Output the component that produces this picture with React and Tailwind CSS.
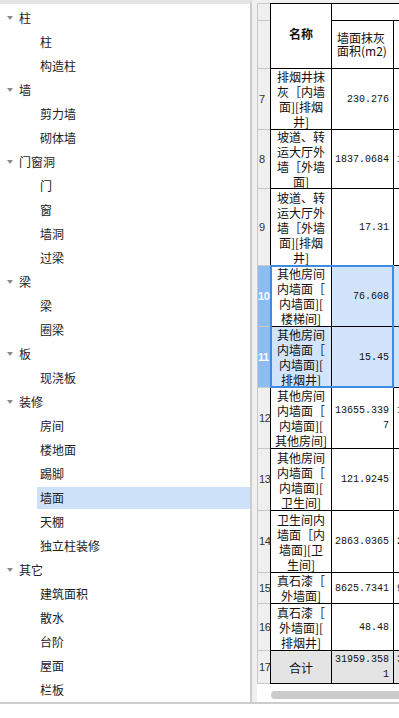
// App.jsx
const tree = [
  { name: '柱', items: ['柱', '构造柱'] },
  { name: '墙', items: ['剪力墙', '砌体墙'] },
  { name: '门窗洞', items: ['门', '窗', '墙洞', '过梁'] },
  { name: '梁', items: ['梁', '圈梁'] },
  { name: '板', items: ['现浇板'] },
  { name: '装修', items: ['房间', '楼地面', '踢脚', '墙面', '天棚', '独立柱装修'] },
  { name: '其它', items: ['建筑面积', '散水', '台阶', '屋面', '栏板'] },
];

const rows = [
  { no: 7, h: 'h-[61px]', name: ['排烟井抹', '灰［内墙', '面][排烟', '井]'], val: ['230.276'], next: ['230.276'] },
  { no: 8, h: 'h-[59px]', name: ['坡道、转', '运大厅外', '墙［外墙', '面]'], val: ['1837.0684'], next: ['1837.0684'] },
  { no: 9, h: 'h-[77px]', name: ['坡道、转', '运大厅外', '墙［外墙', '面][排烟', '井]'], val: ['17.31'], next: ['17.31'] },
];

const selRows = [
  { no: 10, h: 'h-[61px]', name: ['其他房间', '内墙面［', '内墙面][', '楼梯间]'], val: ['76.608'], next: ['76.608'], active: true },
  { no: 11, h: 'h-[61px]', name: ['其他房间', '内墙面［', '内墙面][', '排烟井]'], val: ['15.45'], next: ['15.45'] },
];

const moreRows = [
  { no: 12, h: 'h-[61px]', name: ['其他房间', '内墙面［', '内墙面][', '其他房间]'], val: ['13655.339', '7'], next: ['13655.339', '7'] },
  { no: 13, h: 'h-[62px]', name: ['其他房间', '内墙面［', '内墙面][', '卫生间]'], val: ['121.9245'], next: ['121.9245'] },
  { no: 14, h: 'h-[62px]', name: ['卫生间内', '墙面［内', '墙面][卫', '生间]'], val: ['2863.0365'], next: ['2863.0365'] },
  { no: 15, h: 'h-[31px]', name: ['真石漆［', '外墙面]'], val: ['8625.7341'], next: ['9025.7341'] },
  { no: 16, h: 'h-[47px]', name: ['真石漆［', '外墙面][', '排烟井]'], val: ['48.48'], next: ['48.48'] },
  { no: 17, h: 'h-[33px]', name: ['合计'], val: ['31959.358', '1'], next: ['32359.358', '1'], total: true },
];

function Lines({ lines }) {
  return lines.map((l, i) => <div key={i}>{l}</div>);
}

function Row({ r, sel }) {
  const cellBg = r.total ? 'bg-[#e4e4e4]' : sel ? 'bg-[#d2e4fb]' : 'bg-white';
  const nameBg = r.total ? 'bg-[#e4e4e4]' : sel && !r.active ? 'bg-[#d2e4fb]' : 'bg-white';
  return (
    <div className={`flex ${r.h}`}>
      <div
        className={`w-[13px] shrink-0 border-l border-b border-[#c9c9c9] flex items-center text-[11px] tracking-[-0.4px] font-['Liberation_Sans',sans-serif] ${
          sel ? 'bg-[#8dbcf2] text-white font-bold' : 'bg-[#efefef] text-[#333] pl-[1px]'
        }`}
      >
        <span className="relative z-10">{r.no}</span>
      </div>
      <div
        className={`w-[62px] shrink-0 border-l border-r border-b border-black flex flex-col items-center justify-center text-[12px] leading-[15px] text-[#111] ${nameBg}`}
      >
        <Lines lines={r.name} />
      </div>
      <div
        className={`w-[62px] shrink-0 border-r border-b border-black flex flex-col items-end justify-center pr-[4px] text-[10px] leading-[15px] text-[#111] font-['Liberation_Mono',monospace] ${cellBg}`}
      >
        <Lines lines={r.val} />
      </div>
      <div
        className={`w-[62px] shrink-0 border-r border-b border-black flex flex-col items-end justify-center pr-[4px] text-[10px] leading-[15px] text-[#111] font-['Liberation_Mono',monospace] ${cellBg}`}
      >
        <Lines lines={r.next} />
      </div>
    </div>
  );
}

export default function App() {
  return (
    <div className="w-[399px] h-[718px] bg-white overflow-hidden font-['Noto_Sans_CJK_SC',sans-serif]">
      <div className="flex h-[704px] border-b-2 border-[#cdcdcd]">
        {/* category tree */}
        <div className="w-[252px] shrink-0 bg-white border-t-4 border-t-[#e4e4e4] border-r-2 border-r-[#cdcdcd] pt-[2px] text-[12px] text-[#222]">
          {tree.map((g) => (
            <div key={g.name}>
              <div className="h-6 flex items-center pl-[7px]">
                <span className="w-0 h-0 border-l-[3.5px] border-r-[3.5px] border-t-[4px] border-l-transparent border-r-transparent border-t-[#8a8a8a] mr-[6px]" />
                <span>{g.name}</span>
              </div>
              {g.items.map((it) => (
                <div key={it} className="h-6 flex items-center pl-[37px]">
                  <div className={`flex-1 h-[22px] flex items-center pl-[3px] ${it === '墙面' ? 'bg-[#cde1f9]' : ''}`}>
                    {it}
                  </div>
                </div>
              ))}
            </div>
          ))}
        </div>

        {/* grid */}
        <div className="flex-1 min-w-0 bg-[#f0f0f0] pt-[3px] pl-[5px] flex flex-col overflow-hidden">
          <div className="flex-1 bg-white flex flex-col overflow-hidden">
            <div className="flex h-[66px] w-max">
              <div className="w-[13px] shrink-0 flex flex-col bg-[#efefef]">
                <div className="h-[18px] border-l border-t border-b border-[#c9c9c9]" />
                <div className="flex-1 border-l border-b border-[#c9c9c9]" />
              </div>
              <div className="w-[62px] shrink-0 border border-black flex items-center justify-center font-bold text-[12px] text-[#111] pb-[4px]">
                名称
              </div>
              <div className="flex flex-col">
                <div className="h-[18px] w-[124px] border-t border-b border-r border-black" />
                <div className="flex flex-1">
                  <div className="w-[62px] border-r border-b border-black flex flex-col justify-center pl-[5px] text-[12px] leading-[13px] text-[#111] pb-[2px]">
                    <div>墙面抹灰</div>
                    <div>面积(m2)</div>
                  </div>
                  <div className="w-[62px] border-r border-b border-black" />
                </div>
              </div>
            </div>

            <div className="w-max">
              {rows.map((r) => (
                <Row key={r.no} r={r} />
              ))}
              <div className="relative">
                {selRows.map((r) => (
                  <Row key={r.no} r={r} sel />
                ))}
                <div className="absolute left-[13px] top-[-1px] bottom-0 w-[124px] border-2 border-[#3c8ce6] pointer-events-none" />
              </div>
              {moreRows.map((r) => (
                <Row key={r.no} r={r} />
              ))}
            </div>

            <div className="mt-[7px] ml-[14px] h-[8px] w-[300px] shrink-0 rounded-full bg-[#cbcbcb]" />
          </div>
        </div>
      </div>
    </div>
  );
}
